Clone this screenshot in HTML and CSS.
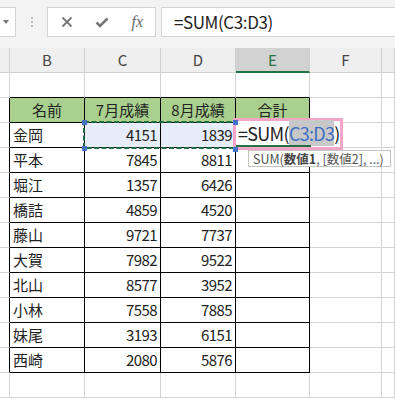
FILE: index.html
```html
<!DOCTYPE html>
<html lang="ja">
<head>
  <meta charset="UTF-8">
  <title>SUM</title>
  <link rel="stylesheet" href="styles.css">
</head>
<body>
  <div class="toolbar">
    <div class="namebox"><span class="caret"></span></div>
    <div class="grip"><i></i><i></i><i></i></div>
    <div class="fxbtns">
      <span class="btn">
        <svg width="12" height="12" viewBox="0 0 12 12"><path d="M1.5 1.5 L10.5 10.5 M10.5 1.5 L1.5 10.5" stroke="#777" stroke-width="1.8" fill="none"/></svg>
      </span>
      <span class="btn">
        <svg width="14" height="11" viewBox="0 0 14 11"><path d="M1.5 5.5 L5 9 L12.5 1.5" stroke="#777" stroke-width="2.6" fill="none"/></svg>
      </span>
      <span class="btn fx">fx</span>
    </div>
    <div class="formula">=SUM(C3:D3)</div>
  </div>

  <div class="sheet">
    <div class="grid">
      <div class="c h"></div>
      <div class="c h">B</div>
      <div class="c h">C</div>
      <div class="c h">D</div>
      <div class="c h sel">E</div>
      <div class="c h">F</div>
      <div class="c h"></div>

      <div class="c r"></div>
      <div class="c tt"></div><div class="c tt"></div><div class="c tt"></div><div class="c tt"></div>
      <div class="c"></div><div class="c"></div>

      <div class="c r tl"></div>
      <div class="c t th">名前</div><div class="c t th">7月成績</div><div class="c t th">8月成績</div><div class="c t th">合計</div>
      <div class="c"></div><div class="c"></div>

      <div class="c r tl"></div>
      <div class="c t">金岡</div><div class="c t n pick">4151</div><div class="c t n pick">1839</div><div class="c t"></div>
      <div class="c"></div><div class="c"></div>

      <div class="c r tl"></div>
      <div class="c t">平本</div><div class="c t n">7845</div><div class="c t n">8811</div><div class="c t"></div>
      <div class="c"></div><div class="c"></div>

      <div class="c r tl"></div>
      <div class="c t">堀江</div><div class="c t n">1357</div><div class="c t n">6426</div><div class="c t"></div>
      <div class="c"></div><div class="c"></div>

      <div class="c r tl"></div>
      <div class="c t">橋詰</div><div class="c t n">4859</div><div class="c t n">4520</div><div class="c t"></div>
      <div class="c"></div><div class="c"></div>

      <div class="c r tl"></div>
      <div class="c t">藤山</div><div class="c t n">9721</div><div class="c t n">7737</div><div class="c t"></div>
      <div class="c"></div><div class="c"></div>

      <div class="c r tl"></div>
      <div class="c t">大賀</div><div class="c t n">7982</div><div class="c t n">9522</div><div class="c t"></div>
      <div class="c"></div><div class="c"></div>

      <div class="c r tl"></div>
      <div class="c t">北山</div><div class="c t n">8577</div><div class="c t n">3952</div><div class="c t"></div>
      <div class="c"></div><div class="c"></div>

      <div class="c r tl"></div>
      <div class="c t">小林</div><div class="c t n">7558</div><div class="c t n">7885</div><div class="c t"></div>
      <div class="c"></div><div class="c"></div>

      <div class="c r tl"></div>
      <div class="c t">妹尾</div><div class="c t n">3193</div><div class="c t n">6151</div><div class="c t"></div>
      <div class="c"></div><div class="c"></div>

      <div class="c r tl"></div>
      <div class="c t">西崎</div><div class="c t n">2080</div><div class="c t n">5876</div><div class="c t"></div>
      <div class="c"></div><div class="c"></div>

      <div class="c r"></div>
      <div class="c"></div><div class="c"></div><div class="c"></div><div class="c"></div><div class="c"></div><div class="c"></div>
    </div>

    <svg class="marquee" width="154" height="28" viewBox="0 0 154 28">
      <rect x="1" y="1" width="152" height="26" fill="none" stroke="#1e6b40" stroke-width="2" stroke-dasharray="5 2.5"/>
    </svg>

    <div class="editor">
      <span>=SUM(</span><span class="ref">C3:D3</span><span>)</span>
      <div class="active"></div>
    </div>

    <span class="hd hd1"></span>
    <span class="hd hd2"></span>
    <span class="hd hd3"></span>
    <span class="hd hd4"></span>

    <div class="tip">SUM(<b>数値1</b>, [数値2], ...)</div>
  </div>
</body>
</html>
```

FILE: styles.css
```css
body {
  margin: 0;
  width: 395px;
  height: 400px;
  overflow: hidden;
  background: #fff;
  font-family: "Noto Sans CJK JP", "Noto Sans", sans-serif;
  color: #222;
}

/* formula bar */
.toolbar {
  height: 48px;
  box-sizing: border-box;
  padding-top: 7px;
  background: #f3f3f3;
  display: flex;
  align-items: flex-start;
}

.namebox {
  width: 16px;
  height: 30px;
  box-sizing: border-box;
  background: #fff;
  border: 1px solid #d4d4d4;
  border-left: none;
  display: flex;
  align-items: center;
  padding-left: 3px;
}

.caret {
  width: 0;
  height: 0;
  border-left: 3.5px solid transparent;
  border-right: 3.5px solid transparent;
  border-top: 4px solid #777;
}

.grip {
  width: 2px;
  margin: 10px 14px 0 15px;
  display: flex;
  flex-direction: column;
  gap: 2px;
}

.grip i {
  width: 2px;
  height: 2px;
  background: #bbb;
}

.fxbtns {
  width: 109px;
  height: 30px;
  box-sizing: border-box;
  background: #fff;
  border: 1px solid #d4d4d4;
  display: flex;
  align-items: center;
  padding-left: 1px;
}

.btn {
  width: 36px;
  display: flex;
  justify-content: center;
  align-items: center;
}

.fx {
  font-family: "Liberation Serif", serif;
  font-style: italic;
  font-size: 16px;
  color: #666;
}

.formula {
  flex: 1;
  margin-left: 5px;
  height: 30px;
  box-sizing: border-box;
  background: #fff;
  border: 1px solid #d4d4d4;
  border-right: none;
  padding-left: 12px;
  font-size: 17px;
  line-height: 27px;
  letter-spacing: -0.4px;
}

/* sheet */
.sheet {
  position: relative;
}

.grid {
  display: grid;
  grid-template-columns: 10px 75px 76px 75px 74px 72px 1fr;
  grid-auto-rows: 25px;
}

.c {
  box-sizing: border-box;
  border-right: 1px solid #d4d4d4;
  border-bottom: 1px solid #d4d4d4;
  padding: 0 3px;
  font-size: 15px;
  line-height: 23px;
  white-space: nowrap;
  overflow: hidden;
}

.h {
  background: #efefef;
  border-color: #d0d0d0;
  color: #444;
  text-align: center;
  line-height: 24px;
}

.h.sel {
  background: #d2d2d2;
  color: #217346;
  border-bottom: 2px solid #217346;
}

.t {
  border-right-color: #000;
  border-bottom-color: #000;
}

.tt {
  border-bottom-color: #000;
}

.tl {
  border-right-color: #000;
}

.th {
  background: #a9d08e;
  text-align: center;
}

.n {
  text-align: right;
  letter-spacing: -0.6px;
  padding-right: 3px;
  line-height: 24px;
}

.pick {
  background: #e6edf8;
}

/* overlays */
.marquee {
  position: absolute;
  left: 83px;
  top: 73px;
}

.editor {
  position: absolute;
  left: 233px;
  top: 70px;
  width: 110px;
  height: 32px;
  box-sizing: border-box;
  border: 3px solid #f2a5c4;
  background: #fff;
  padding-left: 2px;
  font-size: 18px;
  line-height: 24px;
  letter-spacing: -0.7px;
  white-space: nowrap;
}

.ref {
  color: #3b6cc4;
  background: #c8c8c8;
}

.active {
  position: absolute;
  left: 0;
  bottom: 0;
  width: 75px;
  height: 2px;
  background: #217346;
}

.hd {
  position: absolute;
  width: 5px;
  height: 5px;
  background: #4472c4;
}

.hd1 { left: 82px; top: 72px; }
.hd2 { left: 82px; top: 98px; }
.hd3 { left: 233px; top: 72px; }
.hd4 { left: 233px; top: 99px; }

.tip {
  position: absolute;
  left: 248px;
  top: 102px;
  width: 143px;
  height: 17px;
  box-sizing: border-box;
  border: 1px solid #c4c4c4;
  background: #fff;
  padding-left: 4px;
  font-size: 12.5px;
  line-height: 15px;
  color: #555;
  white-space: nowrap;
}

.tip b {
  font-weight: bold;
  color: #444;
}
```
